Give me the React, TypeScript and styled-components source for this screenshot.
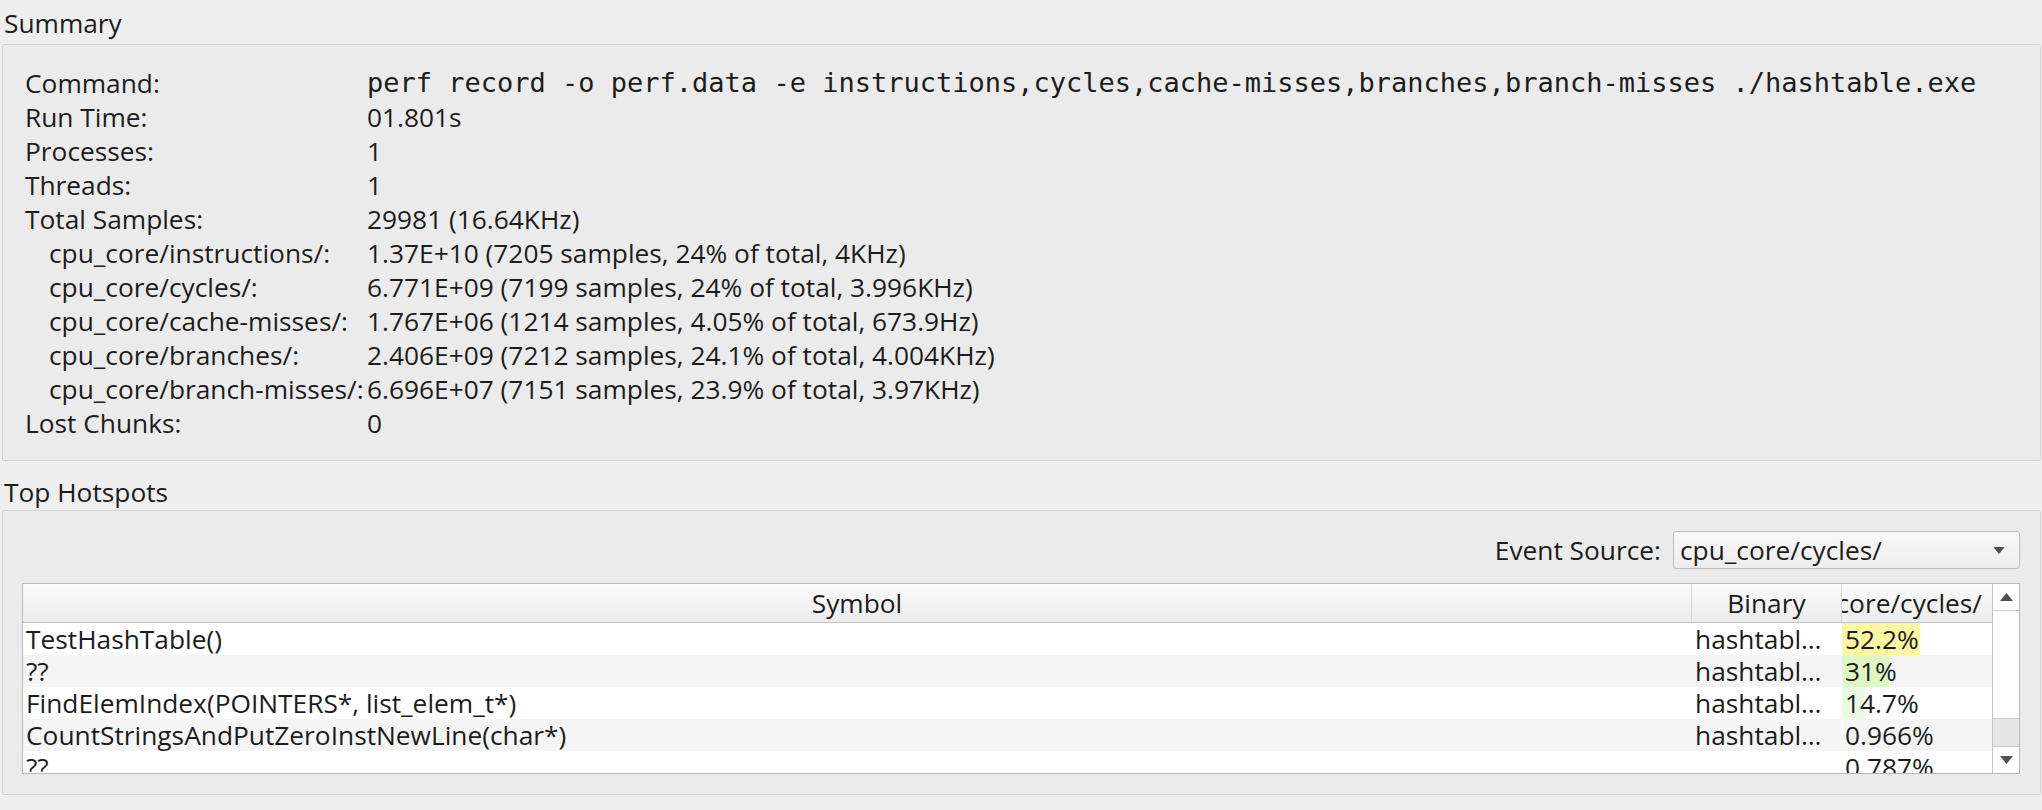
import React from 'react';
import styled, { createGlobalStyle } from 'styled-components';

const GlobalStyle = createGlobalStyle`
  html, body {
    margin: 0;
    padding: 0;
    background: #efefef;
  }
  body {
    font-family: "Open Sans", "Noto Sans", sans-serif;
    font-size: 26.3px;
    color: #1c1c1c;
  }
  * {
    box-sizing: border-box;
  }
`;

const Window = styled.div`
  width: 2042px;
  height: 810px;
  padding: 0 1px 0 2px;
  display: flex;
  flex-direction: column;
  overflow: hidden;
`;

const GroupTitle = styled.div<{ $top: number; $gap: number }>`
  line-height: 34px;
  padding-left: 2px;
  margin-top: ${p => p.$top}px;
  margin-bottom: ${p => p.$gap}px;
  white-space: nowrap;
`;

const GroupBox = styled.div`
  border: 1px solid #d2d2d2;
  border-radius: 2px;
  background: #ebebeb;
`;

const SummaryBox = styled(GroupBox)`
  padding: 21px 20px 20px 22px;
  display: grid;
  grid-template-columns: 342px 1fr;
  grid-auto-rows: 34px;
  line-height: 34px;
`;

const Label = styled.div<{ $indent?: boolean }>`
  padding-left: ${p => (p.$indent ? 24 : 0)}px;
  white-space: nowrap;
`;

const Value = styled.div<{ $mono?: boolean }>`
  white-space: nowrap;
  font-family: ${p => (p.$mono ? '"DejaVu Sans Mono", monospace' : 'inherit')};
  font-size: ${p => (p.$mono ? '27px' : 'inherit')};
`;

const HotspotsBox = styled(GroupBox)`
  padding: 20px 20px 20px 19px;
  display: flex;
  flex-direction: column;
  gap: 14px;
`;

const SourceBar = styled.div`
  height: 38px;
  display: flex;
  justify-content: flex-end;
  align-items: center;
  gap: 12px;
  line-height: 38px;
`;

const ComboBox = styled.div`
  width: 347px;
  height: 38px;
  border: 1px solid #bdbdbd;
  border-radius: 3px;
  background: linear-gradient(#f8f8f8, #ededed);
  display: flex;
  align-items: center;
  justify-content: space-between;
  padding: 0 14px 0 6px;
  line-height: 36px;
`;

const Table = styled.div`
  height: 191px;
  border: 1px solid #b9b9b9;
  background: #fff;
  display: flex;
`;

const TableMain = styled.div`
  flex: 1;
  min-width: 0;
  display: flex;
  flex-direction: column;
  overflow: hidden;
`;

const columns = '1669px 150px 150px';

const HeaderRow = styled.div`
  flex: none;
  height: 39px;
  display: grid;
  grid-template-columns: ${columns};
  border-bottom: 1px solid #c2c2c2;
  background: linear-gradient(#fbfbfb, #ececec);
`;

const HeaderCell = styled.div<{ $align: 'center' | 'end'; $last?: boolean }>`
  line-height: 38px;
  display: flex;
  justify-content: ${p => (p.$align === 'end' ? 'flex-end' : 'center')};
  padding: 0 ${p => (p.$align === 'end' ? 10 : 3)}px 0 3px;
  border-right: ${p => (p.$last ? 'none' : '1px solid #d6d6d6')};
  overflow: hidden;
  white-space: nowrap;
`;

const Row = styled.div<{ $alt: boolean }>`
  flex: none;
  height: 32px;
  line-height: 32px;
  display: grid;
  grid-template-columns: ${columns};
  background: ${p => (p.$alt ? '#f5f5f5' : '#fff')};
`;

const Cell = styled.div`
  padding: 0 3px;
  white-space: nowrap;
  overflow: hidden;
`;

const CostCell = styled(Cell)`
  position: relative;
`;

const HeatBar = styled.div`
  position: absolute;
  left: 0;
  top: 0;
  bottom: 0;
`;

const CostText = styled.span`
  position: relative;
`;

const ScrollBar = styled.div`
  flex: none;
  width: 27px;
  border-left: 1px solid #c4c4c4;
  background: #fff;
  display: flex;
  flex-direction: column;
`;

const ScrollButton = styled.div<{ $up?: boolean }>`
  flex: none;
  height: ${p => (p.$up ? 27 : 26)}px;
  display: flex;
  align-items: center;
  justify-content: center;
  border-bottom: ${p => (p.$up ? '1px solid #d0d0d0' : 'none')};
`;

const ScrollGroove = styled.div`
  flex: 1;
  display: flex;
  flex-direction: column;
  justify-content: flex-end;
`;

const ScrollHandle = styled.div`
  height: 29px;
  background: #e7e7e7;
  border-top: 1px solid #c9c9c9;
  border-bottom: 1px solid #c9c9c9;
`;

const Arrow: React.FC<{ up?: boolean; size?: number }> = ({ up, size = 13 }) => (
  <svg width={size} height={Math.round(size * 0.62)} viewBox="0 0 13 8">
    <path d={up ? 'M0 8 L6.5 0 L13 8 Z' : 'M0 0 L13 0 L6.5 8 Z'} fill="#505050" />
  </svg>
);

const summary: { label: string; value: string; indent?: boolean; mono?: boolean }[] = [
  {
    label: 'Command:',
    value: 'perf record -o perf.data -e instructions,cycles,cache-misses,branches,branch-misses ./hashtable.exe',
    mono: true,
  },
  { label: 'Run Time:', value: '01.801s' },
  { label: 'Processes:', value: '1' },
  { label: 'Threads:', value: '1' },
  { label: 'Total Samples:', value: '29981 (16.64KHz)' },
  { label: 'cpu_core/instructions/:', value: '1.37E+10 (7205 samples, 24% of total, 4KHz)', indent: true },
  { label: 'cpu_core/cycles/:', value: '6.771E+09 (7199 samples, 24% of total, 3.996KHz)', indent: true },
  { label: 'cpu_core/cache-misses/:', value: '1.767E+06 (1214 samples, 4.05% of total, 673.9Hz)', indent: true },
  { label: 'cpu_core/branches/:', value: '2.406E+09 (7212 samples, 24.1% of total, 4.004KHz)', indent: true },
  { label: 'cpu_core/branch-misses/:', value: '6.696E+07 (7151 samples, 23.9% of total, 3.97KHz)', indent: true },
  { label: 'Lost Chunks:', value: '0' },
];

const hotspots = [
  { symbol: 'TestHashTable()', binary: 'hashtabl…', cost: 52.2, text: '52.2%', color: '#fff6a3' },
  { symbol: '??', binary: 'hashtabl…', cost: 31, text: '31%', color: '#dff6c5' },
  { symbol: 'FindElemIndex(POINTERS*, list_elem_t*)', binary: 'hashtabl…', cost: 14.7, text: '14.7%', color: '#eafbe3' },
  { symbol: 'CountStringsAndPutZeroInstNewLine(char*)', binary: 'hashtabl…', cost: 0.966, text: '0.966%', color: '#f3fdf0' },
  { symbol: '??', binary: '', cost: 0.787, text: '0.787%', color: '#f6fef4' },
];

const App: React.FC = () => {
  return (
    <Window>
      <GlobalStyle />
      <GroupTitle $top={6} $gap={4}>Summary</GroupTitle>
      <SummaryBox>
        {summary.map(item => (
          <React.Fragment key={item.label}>
            <Label $indent={item.indent}>{item.label}</Label>
            <Value $mono={item.mono}>{item.value}</Value>
          </React.Fragment>
        ))}
      </SummaryBox>

      <GroupTitle $top={14} $gap={1}>Top Hotspots</GroupTitle>
      <HotspotsBox>
        <SourceBar>
          <span>Event Source:</span>
          <ComboBox>
            <span>cpu_core/cycles/</span>
            <Arrow size={12} />
          </ComboBox>
        </SourceBar>

        <Table>
          <TableMain>
            <HeaderRow>
              <HeaderCell $align="center">Symbol</HeaderCell>
              <HeaderCell $align="center">Binary</HeaderCell>
              <HeaderCell $align="end" $last>cpu_core/cycles/</HeaderCell>
            </HeaderRow>
            {hotspots.map((h, i) => (
              <Row key={i} $alt={i % 2 === 1}>
                <Cell>{h.symbol}</Cell>
                <Cell>{h.binary}</Cell>
                <CostCell>
                  <HeatBar style={{ width: `${h.cost}%`, background: h.color }} />
                  <CostText>{h.text}</CostText>
                </CostCell>
              </Row>
            ))}
          </TableMain>
          <ScrollBar>
            <ScrollButton $up>
              <Arrow up />
            </ScrollButton>
            <ScrollGroove>
              <ScrollHandle />
            </ScrollGroove>
            <ScrollButton>
              <Arrow />
            </ScrollButton>
          </ScrollBar>
        </Table>
      </HotspotsBox>
    </Window>
  );
};

export default App;
